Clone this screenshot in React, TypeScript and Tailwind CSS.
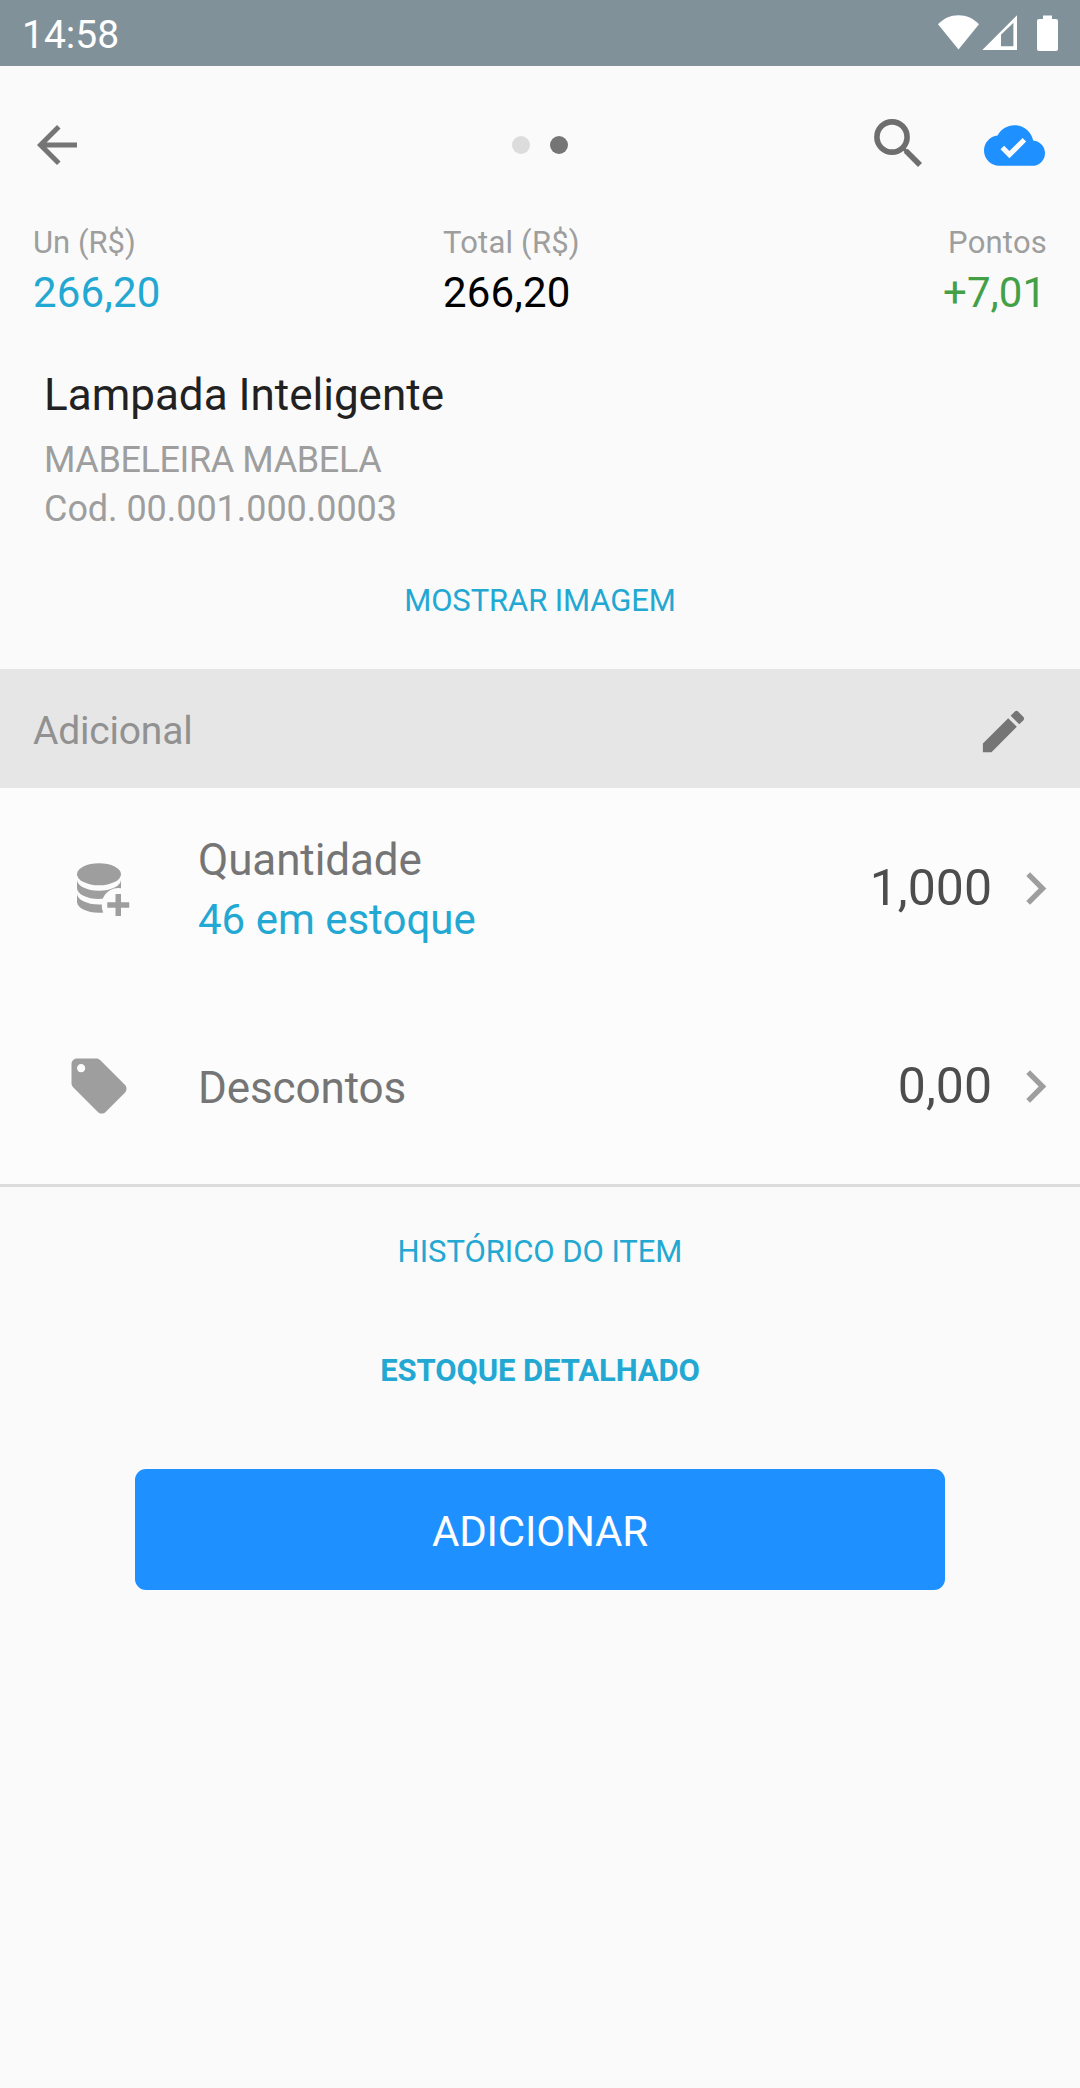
import React from 'react';
import { MdArrowBack, MdChevronRight } from 'react-icons/md';

function StatusIcons() {
  return (
    <svg className="h-[66px] w-[124px]" viewBox="936 0 124 66" fill="#ffffff">
      <path d="M938 24.2C943.6 18.4 950.6 15.2 958.5 15.2S973.400 18.400 979 24.200L958.500 49.500z" />
      <path fillRule="evenodd" d="M982.300 50L1017 15.300V50zM1001 34.800V46.200H1013.400V22.800z" />
      <path d="M1043 15.500h9V19h4a2 2 0 0 1 2 2v28a2 2 0 0 1-2 2h-17a2 2 0 0 1-2-2V21a2 2 0 0 1 2-2h4z" />
    </svg>
  );
}

function SearchIcon() {
  return (
    <svg className="h-[50px] w-[50px]" viewBox="873 118 50 50" fill="none" stroke="#6e6e6e">
      <circle cx="892" cy="137" r="15.100" strokeWidth="5.600" />
      <path d="M903 148L907 152" strokeWidth="3.600" />
      <path d="M905.800 150.800L920 165" strokeWidth="5.600" />
    </svg>
  );
}

function CloudIcon() {
  return (
    <svg className="h-[61px] w-[61px]" viewBox="0 0 24 24" fill="#1e90ff">
      <path d="M19.350 10.040C18.670 6.590 15.640 4 12 4 9.110 4 6.600 5.640 5.350 8.040 2.340 8.360 0 10.910 0 14c0 3.310 2.690 6 6 6h13c2.760 0 5-2.240 5-5 0-2.640-2.050-4.780-4.650-4.960zM10 17l-3.500-3.500 1.410-1.410L10 14.170 15.180 9l1.410 1.410L10 17z" />
    </svg>
  );
}

function PencilIcon() {
  return (
    <svg className="h-[55px] w-[55px]" viewBox="0 0 24 24" fill="#757575">
      <path d="M20.710 7.040c.39-.39.39-1.040 0-1.410l-2.340-2.340c-.37-.39-1.020-.39-1.410 0l-1.840 1.830 3.750 3.750M3 17.250V21h3.750L17.810 9.930l-3.750-3.750L3 17.250z" />
    </svg>
  );
}

function DatabasePlusIcon() {
  return (
    <svg className="h-[66px] w-[66px]" viewBox="0 0 24 24" fill="#9e9e9e">
      <ellipse cx="12" cy="7" rx="8" ry="4" />
      <path d="M4 9c0 2.210 3.580 4 8 4s8-1.790 8-4v3.080A6 6 0 0 0 13.350 15.950c-.44.03-.89.05-1.350.05-4.420 0-8-1.790-8-4z" />
      <path d="M4 14c0 2.210 3.580 4 8 4h1a6 6 0 0 0 .55 2.930c-.5.05-1 .07-1.550.07-4.420 0-8-1.790-8-4z" />
      <path d="M18 14.200h2v3h3v2h-3v3h-2v-3h-3v-2h3z" />
    </svg>
  );
}

function TagIcon() {
  return (
    <svg className="h-[66px] w-[66px]" viewBox="0 0 24 24" fill="#9e9e9e">
      <path d="M21.410 11.580l-9-9C12.050 2.220 11.550 2 11 2H4c-1.100 0-2 .9-2 2v7c0 .55.22 1.050.59 1.420l9 9c.36.36.86.58 1.410.58s1.050-.22 1.410-.59l7-7c.37-.36.59-.86.59-1.410s-.23-1.060-.59-1.420zM5.500 7C4.670 7 4 6.330 4 5.500S4.670 4 5.500 4 7 4.670 7 5.500 6.330 7 5.500 7z" />
    </svg>
  );
}

function OptionRow({
  icon,
  value,
  className,
  children,
}: {
  icon: React.ReactNode;
  value: string;
  className: string;
  children: React.ReactNode;
}) {
  return (
    <div className={`flex items-center pr-3 pl-[66px] ${className}`}>
      {icon}
      <div className="ml-[66px] flex-1 pt-1 text-[44px] leading-[60px] tracking-[-0.1px] text-[#757575]">
        {children}
      </div>
      <span className="text-[50px] leading-[60px] text-[#4d4d4d]">{value}</span>
      <MdChevronRight className="ml-[11px] h-[65px] w-[65px] text-[#9e9e9e]" />
    </div>
  );
}

export default function App() {
  return (
    <div className="flex h-[2088px] w-[1080px] flex-col overflow-hidden bg-[#fafafa] font-['Roboto',sans-serif] whitespace-nowrap">
      <div className="flex h-[66px] items-center justify-between bg-[#81919a] pr-5 pl-[22px]">
        <span className="pt-[3px] text-[39px] leading-[60px] text-white">14:58</span>
        <StatusIcons />
      </div>

      <header className="grid h-[158px] grid-cols-3 items-center pr-[35px] pl-[27px]">
        <MdArrowBack className="h-[60px] w-[60px] text-[#757575]" />
        <div className="flex justify-center gap-5 pl-2">
          <span className="h-[18px] w-[18px] rounded-full bg-[#dcdcdc]" />
          <span className="h-[18px] w-[18px] rounded-full bg-[#757575]" />
        </div>
        <div className="flex items-center justify-end gap-[61px]">
          <div className="-mt-1">
            <SearchIcon />
          </div>
          <CloudIcon />
        </div>
      </header>

      <section className="flex h-[100px] px-[33px] text-[42px] leading-[63px] tracking-[0.2px]">
        <div className="w-[410px] text-[#22a8d2]">
          <div className="text-[31px] leading-[37px] tracking-normal text-[#9e9e9e]">Un (R$)</div>
          266,20
        </div>
        <div className="flex-1 text-black">
          <div className="text-[31px] leading-[37px] text-[#9e9e9e]">Total (R$)</div>
          266,20
        </div>
        <div className="text-right text-[#43a047]">
          <div className="text-[31px] leading-[37px] text-[#9e9e9e]">Pontos</div>
          <div className="pr-px tracking-normal">+7,01</div>
        </div>
      </section>

      <section className="px-11 pt-11 text-[36px] leading-[49px] text-[#9e9e9e]">
        <h1 className="mb-3.5 text-[44px] leading-[54px] text-[#212121]">Lampada Inteligente</h1>
        <div className="tracking-[-0.4px]">MABELEIRA MABELA</div>
        <div className="tracking-[-0.05px]">Cod. 00.001.000.0003</div>
      </section>

      <button className="h-[135px] pb-px text-[31px] tracking-[-0.1px] text-[#22a8d2]">MOSTRAR IMAGEM</button>

      <div className="flex h-[119px] items-center justify-between bg-[#e6e6e6] pt-1 pr-[49px] pl-[33px]">
        <span className="text-[39px] leading-[50px] tracking-[-0.2px] text-[#919191]">Adicional</span>
        <div className="pt-px">
          <PencilIcon />
        </div>
      </div>

      <section className="border-b-3 border-[#dcdcdc] bg-[#fcfcfc]">
        <OptionRow icon={<DatabasePlusIcon />} value="1,000" className="h-[200px]">
          <div>Quantidade</div>
          <div className="text-[42px] tracking-normal text-[#22a8d2]">46 em estoque</div>
        </OptionRow>
        <OptionRow icon={<TagIcon />} value="0,00" className="h-[196px]">
          Descontos
        </OptionRow>
      </section>

      <button className="h-[129px] pt-0.5 text-[31px] tracking-[-0.05px] text-[#22a8d2]">HISTÓRICO DO ITEM</button>
      <button className="h-[109px] pt-0.5 text-[31px] font-bold tracking-[-0.1px] text-[#22a8d2]">
        ESTOQUE DETALHADO
      </button>

      <button className="mx-[135px] mt-11 h-[121px] rounded-[11px] bg-[#1e90ff] pt-1 text-[42px] tracking-[-0.2px] text-white">
        ADICIONAR
      </button>
    </div>
  );
}
